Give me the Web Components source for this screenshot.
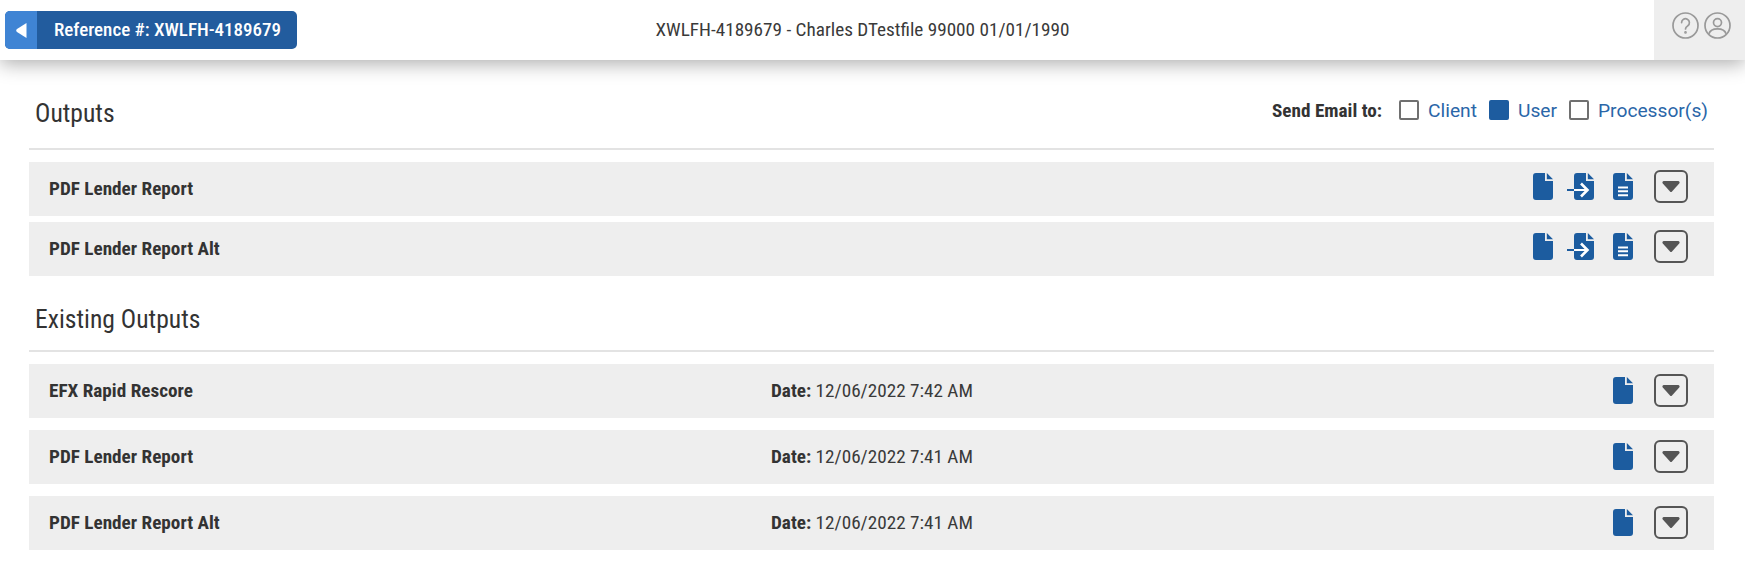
<!DOCTYPE html>
<html lang="en">
<head>
<meta charset="utf-8">
<title>Outputs</title>
<style>
  html, body { margin: 0; background: #fff; }
  body { font-family: "Roboto Condensed", Roboto, "Liberation Sans", sans-serif; color: #333; overflow: hidden; }
</style>
</head>
<body>
<app-header>
  <span slot="reference">Reference #: XWLFH-4189679</span>
  XWLFH-4189679 - Charles DTestfile 99000 01/01/1990
</app-header>
<page-main>
  <section-head>
    Outputs
    <send-email slot="aside"></send-email>
  </section-head>
  <output-row name="PDF Lender Report" tight>
    <doc-icon></doc-icon><doc-icon kind="send"></doc-icon><doc-icon kind="lines"></doc-icon>
  </output-row>
  <output-row name="PDF Lender Report Alt" tight>
    <doc-icon></doc-icon><doc-icon kind="send"></doc-icon><doc-icon kind="lines"></doc-icon>
  </output-row>
  <section-head second>Existing Outputs</section-head>
  <output-row name="EFX Rapid Rescore" date="12/06/2022 7:42 AM"><doc-icon></doc-icon></output-row>
  <output-row name="PDF Lender Report" date="12/06/2022 7:41 AM"><doc-icon></doc-icon></output-row>
  <output-row name="PDF Lender Report Alt" date="12/06/2022 7:41 AM"><doc-icon></doc-icon></output-row>
</page-main>
<script>
class AppHeader extends HTMLElement {
  constructor() {
    super();
    this.attachShadow({ mode: 'open' });
    this.shadowRoot.innerHTML = `
      <style>
        :host { display: flex; height: 60px; background: #fff; box-shadow: 0 4px 18px rgba(0,0,0,.32); position: relative; }
        .back { display: flex; align-items: stretch; height: 38px; margin: 11px 0 0 5px; width: 292px; border-radius: 5px; overflow: hidden; background: #225c9e; color: #fff; font-size: 19px; font-weight: 500; }
        .arrow { width: 32px; background: #3f84d4; display: flex; align-items: center; justify-content: center; }
        .label { padding-left: 17px; line-height: 37px; white-space: nowrap; }
        .title { flex: 1; display: flex; align-items: center; justify-content: center; padding-right: 226px; font-size: 19.2px; color: #3a3a3a; padding-bottom: 1px; white-space: nowrap; }
        .tools { width: 91px; background: #eee; display: flex; gap: 5px; padding: 12px 0 0 18px; box-sizing: border-box; align-items: flex-start; }
      </style>
      <div class="back">
        <div class="arrow"><svg width="11" height="15" viewBox="0 0 11 15"><path d="M10.5 0V15L1 9a1.8 1.8 0 0 1 0-3Z" fill="#fff"/></svg></div>
        <div class="label"><slot name="reference"></slot></div>
      </div>
      <div class="title"><slot></slot></div>
      <div class="tools">
        <svg width="27" height="27" viewBox="0 0 27 27" fill="none" stroke="#999" stroke-width="1.7"><circle cx="13.5" cy="13.5" r="12.5"/><path d="M9.6 10.6a3.9 3.9 0 1 1 6.2 3.2c-1.4 1-2.3 1.6-2.3 3.2" stroke-linecap="round"/><circle cx="13.5" cy="20.4" r=".5" fill="#999"/></svg>
        <svg width="27" height="27" viewBox="0 0 27 27" fill="none" stroke="#999" stroke-width="1.7"><circle cx="13.5" cy="13.5" r="12.5"/><circle cx="13.5" cy="10.6" r="4"/><path d="M5 21.8c1-3.6 4.4-4.9 8.5-4.9s7.5 1.3 8.5 4.9"/></svg>
      </div>
    `;
  }
}

class PageMain extends HTMLElement {
  constructor() {
    super();
    this.attachShadow({ mode: 'open' });
    this.shadowRoot.innerHTML = `
      <style>
        :host { display: block; padding: 0 31px 0 29px; }
      </style>
      <slot></slot>
    `;
  }
}

class SectionHead extends HTMLElement {
  constructor() {
    super();
    this.attachShadow({ mode: 'open' });
    this.shadowRoot.innerHTML = `
      <style>
        :host { display: flex; align-items: center; justify-content: space-between; height: 90px; box-sizing: border-box; padding: 18px 6px 0 6px; border-bottom: 2px solid #e3e3e3; margin-bottom: 12px; font-size: 25.6px; color: #333; }
        :host([second]) { height: 70px; padding-top: 5px; }
      </style>
      <div><slot></slot></div>
      <slot name="aside"></slot>
    `;
  }
}

class SendEmail extends HTMLElement {
  constructor() {
    super();
    this.attachShadow({ mode: 'open' });
    this.shadowRoot.innerHTML = `
      <style>
        :host { display: flex; align-items: center; font-size: 19.2px; margin-bottom: 6px; }
        b { font-weight: 700; color: #333; margin-right: 17px; }
        label { display: flex; align-items: center; gap: 9px; margin-right: 12px; color: #2a66a8; font-family: Roboto, sans-serif; font-weight: 400; }
        label:last-child { margin-right: 0; }
        i { width: 16px; height: 16px; border: 2px solid #707070; border-radius: 2px; display: block; }
        i.on { background: #1d5c9f; border-color: #1d5c9f; }
      </style>
      <b>Send Email to:</b>
      <label><i></i>Client</label>
      <label><i class="on"></i>User</label>
      <label><i></i>Processor(s)</label>
    `;
  }
}

class OutputRow extends HTMLElement {
  constructor() {
    super();
    this.attachShadow({ mode: 'open' });
    const date = this.getAttribute('date');
    this.shadowRoot.innerHTML = `
      <style>
        :host { display: grid; grid-template-columns: 722px 1fr auto; align-items: center; box-sizing: border-box; height: 54px; margin-bottom: 12px; padding: 0 26px 2px 20px; background: #eee; font-size: 19.2px; color: #333; }
        :host([tight]) { margin-bottom: 6px; }
        :host([tight]) .actions { margin-bottom: 3px; }
        .name { font-weight: 700; }
        .date { color: #3a3a3a; }
        .actions { display: flex; align-items: center; justify-content: flex-end; gap: 18px; }
        b { font-weight: 700; color: #333; }
        button { all: unset; box-sizing: border-box; width: 34px; height: 33px; margin-left: 3px; border: 2px solid #555; border-radius: 6px; display: flex; align-items: center; justify-content: center; }
      </style>
      <div class="name">${this.getAttribute('name')}</div>
      <div class="date">${date ? `<b>Date:</b> ${date}` : ''}</div>
      <div class="actions">
        <slot></slot>
        <button><svg width="18" height="11" viewBox="0 0 18 11"><path d="M1.8 0H16.2a1.5 1.5 0 0 1 1 2.5L10 10.4a1.4 1.4 0 0 1-2 0L.8 2.5A1.5 1.5 0 0 1 1.8 0Z" fill="#555"/></svg></button>
      </div>
    `;
  }
}

class DocIcon extends HTMLElement {
  constructor() {
    super();
    this.attachShadow({ mode: 'open' });
    const kind = this.getAttribute('kind');
    const sheet = '<path d="M3 0H12V8H20V24a3 3 0 0 1-3 3H3a3 3 0 0 1-3-3V3A3 3 0 0 1 3 0Z" fill="#1c5c9f"/><path d="M13.8 0 20 6.3H13.8Z" fill="#1c5c9f"/>';
    let extra = '';
    let box = '0 0 20 27', w = 20, style = '';
    if (kind === 'lines') {
      extra = '<path d="M5 14.5H15M5 18.3H15M5 22.2H15" stroke="#fff" stroke-width="2"/>';
    }
    if (kind === 'send') {
      box = '-7 0 28 27'; w = 28;
      style = ':host { margin-left: -4px; }';
      extra = '<path d="M-7 17H0" stroke="#1c5c9f" stroke-width="2"/><path d="M0 17H12" stroke="#fff" stroke-width="2"/><path d="M7 10.5 13.5 17 7 23.5" fill="none" stroke="#fff" stroke-width="2.6"/>';
    }
    this.shadowRoot.innerHTML = `
      <style>
        :host { display: block; line-height: 0; }
        ${style}
      </style>
      <svg width="${w}" height="27" viewBox="${box}">${sheet}${extra}</svg>
    `;
  }
}

customElements.define('app-header', AppHeader);
customElements.define('page-main', PageMain);
customElements.define('section-head', SectionHead);
customElements.define('send-email', SendEmail);
customElements.define('output-row', OutputRow);
customElements.define('doc-icon', DocIcon);
</script>
</body>
</html>
